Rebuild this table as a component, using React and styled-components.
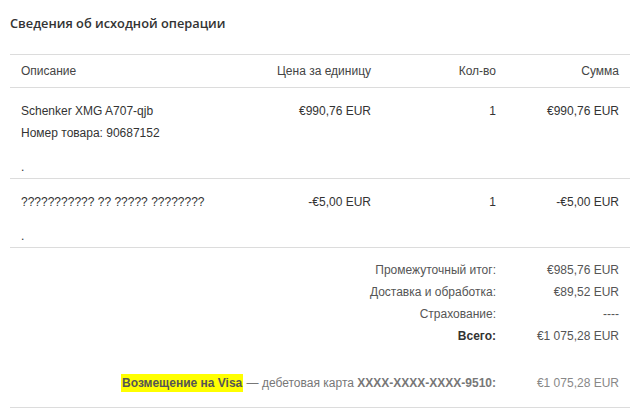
import React from 'react'
import styled, { createGlobalStyle } from 'styled-components'

const GlobalStyle = createGlobalStyle`
  body {
    margin: 0;
    background: #fff;
    font-family: "Liberation Sans", Arial, sans-serif;
    color: #333;
  }
`

const items = [
  {
    lines: ['Schenker XMG A707-qjb', 'Номер товара: 90687152'],
    price: '€990,76 EUR',
    qty: '1',
    sum: '€990,76 EUR'
  },
  {
    lines: ['??????????? ?? ????? ????????'],
    price: '-€5,00 EUR',
    qty: '1',
    sum: '-€5,00 EUR'
  }
]

const totals = [
  { label: 'Промежуточный итог:', value: '€985,76 EUR' },
  { label: 'Доставка и обработка:', value: '€89,52 EUR' },
  { label: 'Страхование:', value: '----' },
  { label: 'Всего:', value: '€1 075,28 EUR', strong: true }
]

const App = () => (
  <>
    <GlobalStyle />
    <Panel>
      <Title>Сведения об исходной операции</Title>
      <HeadRow>
        <Cell>Описание</Cell>
        <Cell right>Цена за единицу</Cell>
        <Cell right>Кол-во</Cell>
        <Cell right>Сумма</Cell>
      </HeadRow>
      {items.map((item, i) => (
        <ItemRow key={i}>
          <Cell>
            {item.lines.map(line => (
              <div key={line}>{line}</div>
            ))}
            <Dot>.</Dot>
          </Cell>
          <Cell right>{item.price}</Cell>
          <Cell right>{item.qty}</Cell>
          <Cell right>{item.sum}</Cell>
        </ItemRow>
      ))}
      <Summary>
        {totals.map(t => (
          <TotalLine key={t.label}>
            <TotalLabel strong={t.strong}>{t.label}</TotalLabel>
            <TotalValue>{t.value}</TotalValue>
          </TotalLine>
        ))}
        <RefundLine>
          <RefundLabel>
            <Mark>Возмещение на Visa</Mark> — дебетовая карта{' '}
            <b>XXXX-XXXX-XXXX-9510:</b>
          </RefundLabel>
          <RefundValue>€1 075,28 EUR</RefundValue>
        </RefundLine>
      </Summary>
    </Panel>
  </>
)

const Panel = styled.div`
  width: 620px;
  padding: 14px 0 0 10px;
  font-size: 12px;
`

const Title = styled.h2`
  margin: 0 0 22px;
  font-family: "Open Sans", "Liberation Sans", sans-serif;
  font-size: 12.8px;
  font-weight: 600;
  line-height: 18px;
  color: #333;
`

const columns = '222px 150px 125px 123px'

const HeadRow = styled.div`
  display: grid;
  grid-template-columns: ${columns};
  border-top: 1px solid #dcdcdc;
  border-bottom: 1px solid #dcdcdc;
  line-height: 32px;
  color: #444;
`

const ItemRow = styled.div`
  display: grid;
  grid-template-columns: ${columns};
  border-bottom: 1px solid #dcdcdc;
  padding-top: 12px;
  line-height: 22px;
`

const Cell = styled.div`
  padding: 0 11px;
  text-align: ${props => (props.right ? 'right' : 'left')};
`

const Dot = styled.div`
  margin-top: 12px;
`

const Summary = styled.div`
  padding: 11px 0 13px;
  border-bottom: 1px solid #dcdcdc;
  line-height: 22px;
`

const TotalLine = styled.div`
  display: grid;
  grid-template-columns: 1fr 123px;
`

const TotalLabel = styled.div`
  padding-right: 11px;
  text-align: right;
  color: ${props => (props.strong ? '#333' : '#555')};
  font-weight: ${props => (props.strong ? 'bold' : 'normal')};
`

const TotalValue = styled.div`
  padding-right: 11px;
  text-align: right;
  color: #555;
`

const RefundLine = styled(TotalLine)`
  margin-top: 25px;
`

const RefundLabel = styled.div`
  padding-right: 11px;
  text-align: right;
  color: #777;

  b {
    font-weight: bold;
  }
`

const RefundValue = styled.div`
  padding-right: 11px;
  text-align: right;
  color: #888;
`

const Mark = styled.span`
  background: #ffff00;
  color: #555;
  font-weight: bold;
  padding: 2px 1px;
`

export default App
